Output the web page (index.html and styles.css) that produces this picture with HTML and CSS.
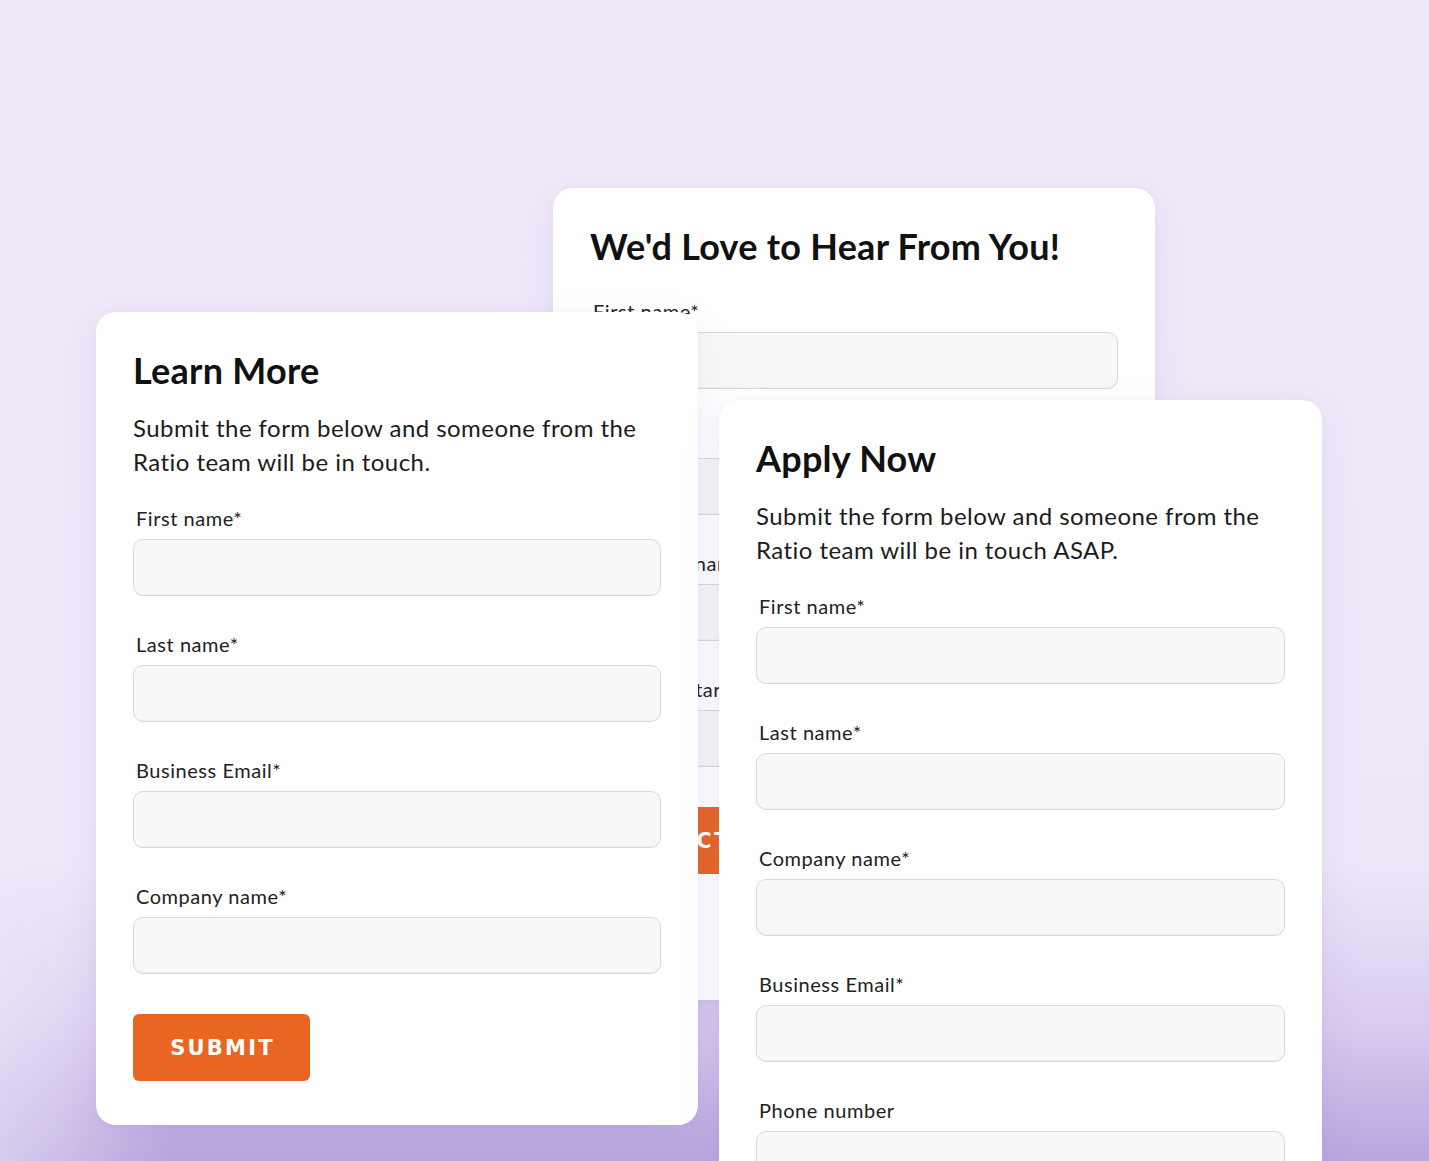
FILE: index.html
```html
<!DOCTYPE html>
<html lang="en">
<head>
<meta charset="utf-8">
<title>Forms</title>
<link rel="stylesheet" href="styles.css">
</head>
<body>
<main class="stage">
  <section class="card card-back">
    <h2 class="card-title">We'd Love to Hear From You!</h2>
    <form class="form form-tight">
      <div class="field"><label class="label">First name*</label><div class="input"></div></div>
      <div class="field"><label class="label">Last name*</label><div class="input"></div></div>
      <div class="field"><label class="label">Institution name*</label><div class="input"></div></div>
      <div class="field"><label class="label">Preferred start date</label><div class="input"></div></div>
      <button type="button" class="btn btn-wide">CONTACT US</button>
    </form>
  </section>

  <section class="card card-left">
    <h2 class="card-title">Learn More</h2>
    <p class="card-desc">Submit the form below and someone from the Ratio team will be in touch.</p>
    <form class="form">
      <div class="field"><label class="label">First name*</label><div class="input"></div></div>
      <div class="field"><label class="label">Last name*</label><div class="input"></div></div>
      <div class="field"><label class="label">Business Email*</label><div class="input"></div></div>
      <div class="field"><label class="label">Company name*</label><div class="input"></div></div>
      <button type="button" class="btn">SUBMIT</button>
    </form>
  </section>

  <section class="card card-right">
    <h2 class="card-title">Apply Now</h2>
    <p class="card-desc">Submit the form below and someone from the Ratio team will be in touch ASAP.</p>
    <form class="form">
      <div class="field"><label class="label">First name*</label><div class="input"></div></div>
      <div class="field"><label class="label">Last name*</label><div class="input"></div></div>
      <div class="field"><label class="label">Company name*</label><div class="input"></div></div>
      <div class="field"><label class="label">Business Email*</label><div class="input"></div></div>
      <div class="field"><label class="label">Phone number</label><div class="input"></div></div>
    </form>
  </section>
</main>
</body>
</html>
```

FILE: styles.css
```css
* { box-sizing: border-box; }

html, body {
  margin: 0;
  padding: 0;
  width: 1429px;
  height: 1161px;
  overflow: hidden;
}

body {
  font-family: Lato, "Noto Sans", sans-serif;
  color: #141414;
  background:
    linear-gradient(to right, rgba(240, 233, 248, 0.55) 0, rgba(240, 233, 248, 0) 12%),
    linear-gradient(to bottom, #f0e9f8 0, #efe7f8 74%, #d9ccef 88%, #b8a6de 100%);
}

.stage {
  position: relative;
  width: 1429px;
  height: 1161px;
  overflow: hidden;
}

.card {
  position: absolute;
  background: #ffffff;
  border-radius: 20px;
  padding: 36px 37px 44px;
  box-shadow: 0 12px 40px rgba(130, 100, 190, 0.10), 0 2px 8px rgba(130, 100, 190, 0.05);
}

.card-back  { left: 553px; top: 188px; width: 602px; height: 812px; }
.card-left  { left: 96px;  top: 312px; width: 602px; }
.card-right { left: 719px; top: 400px; width: 603px; height: 800px; }

.card-title {
  margin: 0;
  font-size: 36px;
  line-height: 44px;
  font-weight: 700;
  color: #111111;
  letter-spacing: 0.25px;
}

.card-desc {
  margin: 19px 0 0;
  font-size: 24px;
  line-height: 34px;
  color: #1c1c1c;
  letter-spacing: 0.45px;
  width: 528px;
}

.form {
  display: flex;
  flex-direction: column;
  gap: 36px;
  margin-top: 27px;
}

.form-tight { margin-top: 31px; }

.field {
  display: flex;
  flex-direction: column;
  gap: 9px;
}

.label {
  font-size: 20px;
  line-height: 24px;
  color: #222222;
  padding-left: 3px;
  letter-spacing: 0.55px;
  white-space: nowrap;
}

.input {
  height: 57px;
  background: #f8f8f8;
  border: 1.5px solid #d9d9dc;
  border-radius: 10px;
  box-shadow: inset 0 -1px 0 rgba(0, 0, 0, 0.03);
}

.btn {
  align-self: flex-start;
  margin-top: 4px;
  width: 177px;
  height: 67px;
  border: 0;
  border-radius: 6px;
  background: #e86622;
  color: #ffffff;
  font-family: "DejaVu Sans", sans-serif;
  font-weight: 700;
  font-size: 21px;
  letter-spacing: 2.2px;
  padding: 0 0 0 2px;
}

.btn-wide { width: 200px; }
```
